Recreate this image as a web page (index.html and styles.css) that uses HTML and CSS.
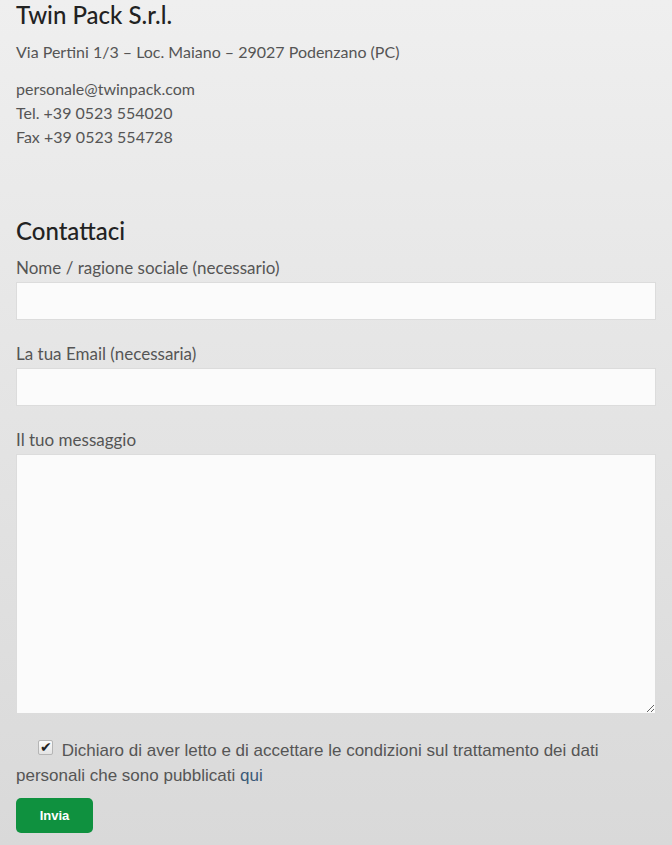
FILE: index.html
```html
<!DOCTYPE html>
<html lang="it">
<head>
    <meta charset="UTF-8">
    <meta name="viewport" content="width=device-width, initial-scale=1.0">
    <title>Contatti - Twin Pack S.r.l.</title>
    <link rel="stylesheet" href="styles.css">
</head>
<body>
    <div class="page">
        <!-- Company info -->
        <section class="company">
            <h2>Twin Pack S.r.l.</h2>
            <p>Via Pertini 1/3 – Loc. Maiano – 29027 Podenzano (PC)</p>
            <p>personale@twinpack.com<br>Tel. +39 0523 554020<br>Fax +39 0523 554728</p>
        </section>

        <!-- Contact form -->
        <section class="contact">
            <h2>Contattaci</h2>
            <form class="contact-form">
                <label for="nome">Nome / ragione sociale (necessario)</label>
                <input type="text" id="nome" name="nome">

                <label for="email">La tua Email (necessaria)</label>
                <input type="email" id="email" name="email">

                <label for="messaggio">Il tuo messaggio</label>
                <textarea id="messaggio" name="messaggio"></textarea>

                <p class="privacy">
                    <input type="checkbox" id="privacy" checked>
                    Dichiaro di aver letto e di accettare le condizioni sul trattamento dei dati personali che sono pubblicati <a href="#">qui</a>
                </p>

                <button type="submit">Invia</button>
            </form>
        </section>
    </div>
</body>
</html>
```

FILE: styles.css
```css
html {
    min-height: 100%;
    background: linear-gradient(to bottom, #efefef 0%, #e6e6e6 40%, #d9d9d9 100%);
}
body {
    margin: 0;
    font-family: Lato, "Open Sans", sans-serif;
    color: #555;
}
.page {
    padding: 0 16px 12px 16px;
}
.company h2,
.contact h2 {
    margin: 0;
    font-size: 24px;
    font-weight: 500;
    color: #222;
    line-height: 30px;
}
.company p {
    margin: 10px 0 0 0;
    font-size: 16px;
    line-height: 24px;
    color: #555;
}
.company p + p {
    margin-top: 13px;
}
.contact {
    margin-top: 67px;
}
.contact h2 {
    margin-bottom: 10px;
}
.contact-form {
    display: flex;
    flex-direction: column;
}
.contact-form label {
    font-size: 17px;
    color: #555;
    line-height: 20px;
    margin-top: 2px;
    margin-bottom: 4px;
}
.contact-form input[type="text"],
.contact-form input[type="email"],
.contact-form textarea {
    box-sizing: border-box;
    width: 100%;
    height: 38px;
    margin: 0 0 22px 0;
    background: #fbfbfb;
    border: 1px solid #dcdcdc;
    border-radius: 0;
    font-family: inherit;
    font-size: 15px;
}
.contact-form textarea {
    height: 260px;
    resize: vertical;
    margin-bottom: 24px;
}
.privacy {
    margin: 0;
    font-family: "Liberation Sans Narrow", "Liberation Sans", sans-serif;
    font-size: 17px;
    line-height: 25px;
    color: #555;
    text-indent: 22px;
}
.privacy input {
    -webkit-appearance: none;
    appearance: none;
    position: relative;
    box-sizing: border-box;
    margin: 0 4px 0 0;
    width: 15px;
    height: 15px;
    vertical-align: 1px;
    border: 1px solid #b5b5b5;
    border-radius: 2px;
    background: linear-gradient(to bottom, #fafafa, #e4e4e4);
}
.privacy input:checked::after {
    content: "\2714";
    position: absolute;
    left: 1px;
    top: -2px;
    font-size: 14px;
    line-height: 16px;
    text-indent: 0;
    color: #222;
}
.privacy a {
    color: #3b5a78;
    text-decoration: none;
}
.contact-form button {
    align-self: flex-start;
    margin-top: 10px;
    width: 77px;
    height: 35px;
    background: #0f913f;
    color: #fff;
    border: none;
    border-radius: 5px;
    font-family: "Liberation Sans Narrow", "Liberation Sans", sans-serif;
    font-weight: bold;
    font-size: 13px;
    cursor: pointer;
}
.contact-form button:hover {
    background: #0c7a35;
}
```
